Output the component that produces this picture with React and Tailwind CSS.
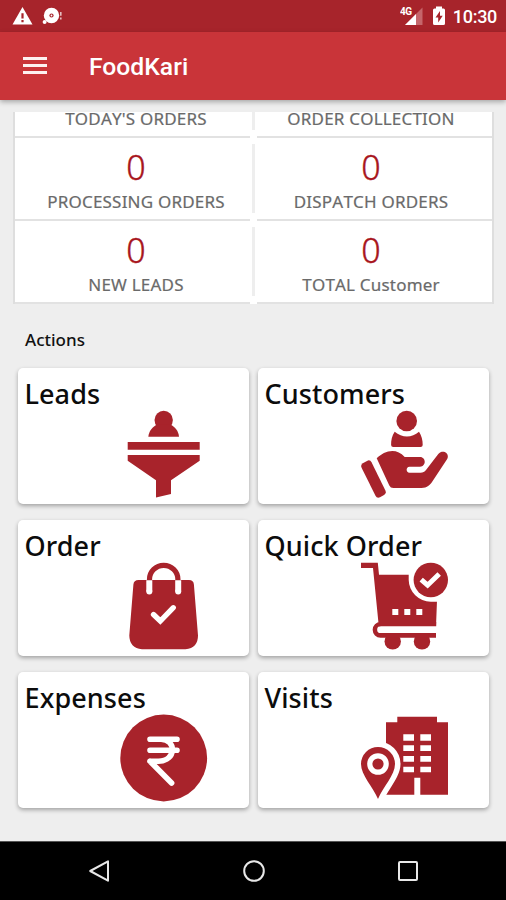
import clsx from "clsx";

const STATS = [
  { label: "TODAY'S ORDERS" },
  { label: "ORDER COLLECTION" },
  { value: "0", label: "PROCESSING ORDERS" },
  { value: "0", label: "DISPATCH ORDERS" },
  { value: "0", label: "NEW LEADS" },
  { value: "0", label: "TOTAL Customer" },
];

const ACTIONS = [
  { title: "Leads", Icon: LeadsIcon },
  { title: "Customers", Icon: CustomersIcon },
  { title: "Order", Icon: OrderIcon },
  { title: "Quick Order", Icon: QuickOrderIcon },
  { title: "Expenses", Icon: ExpensesIcon },
  { title: "Visits", Icon: VisitsIcon },
];

function LeadsIcon() {
  return (
    <>
      <circle cx="43.7" cy="10" r="9.2" />
      <path d="M28.3 26.7C29 21 32.5 16.5 37.5 14.5H50C55 16.5 58.5 21 59 26.7Z" />
      <path d="M7.7 32H79.7V39.7H7.7Z" />
      <path d="M7.7 45H79.7V50.7L51 70.3V84L36 87.5V70.3L7.7 50.7Z" />
    </>
  );
}

function CustomersIcon() {
  return (
    <>
      <circle cx="46.7" cy="11" r="10.3" />
      <path d="M34.7 21.7C32 25.5 31 30 31.1 35Q31.2 37 33.2 37H60.6Q62.6 37 62.7 35C62.8 30 61.5 25.5 59 21.7C52 28 42 28 34.7 21.7Z" />
      <path d="M2.8 53.3L7 50.9Q10 49.3 11.5 52.3L25.4 80.5Q26.6 83.4 24 84.9L20 87.2Q17 88.6 15.5 85.8L1.6 57.7Q.3 54.8 2.8 53.3Z" />
      <path d="M16.7 48.3C24 41 36 37 44.7 47H60C66.3 47 66.3 56.7 60 56.7H49.5C45.7 56.7 45.7 62.7 49.5 62.7H60.5C63 62.7 64.5 62 66 60L78.3 43.9C83 39 90 43.5 87.2 49L74 69C70.5 75 67 78 61.5 78H33.3Q30.5 78 29.3 75.5Z" />
    </>
  );
}

function OrderIcon() {
  return (
    <>
      <path d="M18.5 18H69Q73.6 18 73.9 22.5L78 73.5Q78 86 65.5 87.3H22Q9.5 86 9.3 73.5L13.4 22.5Q13.8 18 18.5 18Z" />
      <path
        d="M29.5 18V17.3A14.2 14 0 0 1 57.9 17.3V18"
        fill="none"
        stroke="#a8232b"
        strokeWidth="5.2"
      />
      <path
        d="M29.3 18.2V29.6M58.2 18.2V29.6"
        fill="none"
        stroke="#fff"
        strokeWidth="6"
      />
      <circle cx="29.3" cy="29.6" r="3" fill="#fff" />
      <circle cx="58.2" cy="29.6" r="3" fill="#fff" />
      <path
        d="M33.5 52.5L40.3 59L53.3 45.7"
        fill="none"
        stroke="#fff"
        strokeWidth="5.3"
        strokeLinecap="round"
      />
    </>
  );
}

function QuickOrderIcon() {
  return (
    <>
      <path d="M1 .7H17.8L19 12.7H78L76 64.3H18.8L13 6H1Z" />
      <path d="M82 12V39.7H70.7A22 22 0 0 1 48.7 18V12Z" fill="#fff" />
      <circle cx="32.7" cy="79.4" r="8.2" />
      <circle cx="62" cy="79.4" r="8.2" />
      <path d="M20.5 64H77V71.3H20.5Z" fill="#fff" />
      <path d="M20.5 60H76.2V64.3H20.5A3.3 3.3 0 0 0 20.5 71H76V75.7H20.5A7.8 7.8 0 0 1 20.5 60Z" />
      <circle cx="70.8" cy="18" r="17.2" />
      <path
        d="M32.3 47h6v6h-6zM44.3 47h6v6h-6zM56.3 47h6v6h-6z"
        fill="#fff"
      />
      <path
        d="M61.2 17.6L67.6 23.2L79.2 12"
        fill="none"
        stroke="#fff"
        strokeWidth="5"
      />
    </>
  );
}

function ExpensesIcon() {
  return (
    <>
      <circle cx="43.7" cy="44" r="43.4" />
      <path
        d="M30 25.3H57M30 36.3H57M30 47.2H38.5C56.5 47.2 56.5 25.3 41 25.3M30 47.2L51.6 69"
        fill="none"
        stroke="#fff"
        strokeWidth="5.6"
        strokeLinecap="round"
        strokeLinejoin="round"
      />
    </>
  );
}

function VisitsIcon() {
  return (
    <>
      <path d="M26 8.3H37.3V2.7H77V8.3H88V80.7H60.3V63.7H54.3V80.7H26Z" />
      <path
        d="M43.3 20.3H54v6.4H43.3zM60.3 20.3H71v6.4H60.3zM43.3 31.3H54V37H43.3zM60.3 31.3H71V37H60.3zM43.3 42H54v5.7H43.3zM60.3 42H71v5.7H60.3zM43.3 52.7H54v5.6H43.3zM60.3 52.7H71v5.6H60.3z"
        fill="#fff"
      />
      <path
        d="M18 85C13 73 1 61 1 50A17 17 0 0 1 35 50C35 61 23 73 18 85Z"
        stroke="#fff"
        strokeWidth="11"
        paintOrder="stroke"
      />
      <circle cx="18" cy="50" r="8.2" stroke="#fff" strokeWidth="5.2" />
    </>
  );
}

function StatusBar() {
  return (
    <div className="flex h-8 shrink-0 items-center bg-[#a7242b] pr-[9px] pl-3 text-white">
      <svg width="52" height="20" viewBox="0 0 52 20" fill="#fff">
        <path d="M10.5 1L20.5 18.5H.5Z" />
        <path d="M9.4 7.3h2.2v5.2H9.4zM9.4 14h2.2v2.2H9.4z" fill="#a7242b" />
        <circle cx="39.5" cy="9.5" r="7.7" />
        <circle cx="32.6" cy="16" r="2" />
        <circle cx="39.5" cy="9.5" r="2.1" fill="#a7242b" />
        <circle cx="39.5" cy="9.5" r=".9" />
        <path d="M48 6h1.6v3.8H48zM48 11.5h1.6v2H48z" opacity=".7" />
      </svg>
      <svg className="ml-auto" width="24" height="20" viewBox="0 0 24 20">
        <path d="M22.5 1.5V19H5Z" fill="#c5666b" />
        <path d="M16 8V19H5Z" fill="#fff" />
        <text
          x="0"
          y="9.3"
          fill="#fff"
          fontSize="10"
          fontWeight="700"
          fontFamily="Roboto, sans-serif"
          letterSpacing="-0.6"
        >
          4G
        </text>
      </svg>
      <svg className="ml-2" width="14" height="20" viewBox="0 0 14 20">
        <path
          d="M4 .5H10V2.5H11.5Q13 2.5 13 4V17.5Q13 19 11.5 19H2.5Q1 19 1 17.5V4Q1 2.5 2.5 2.5H4Z"
          fill="#fff"
        />
        <path d="M8 5L3.5 11.5H6.2V16.5L10.7 9.8H8Z" fill="#a7242b" />
      </svg>
      <span className="ml-[7px] pt-px font-[Roboto] text-[18px] leading-8 font-medium tracking-[-0.3px]">
        10:30
      </span>
    </div>
  );
}

function AppBar() {
  return (
    <header className="z-10 flex h-[68px] shrink-0 items-center bg-[#c93439] pl-[23px] text-white shadow-[0_2px_5px_rgba(0,0,0,0.3)]">
      <button type="button" aria-label="Menu" className="mb-px flex flex-col gap-1">
        <span className="h-[3px] w-[23.5px] bg-[#fdf0f0]" />
        <span className="h-[3px] w-[23.5px] bg-[#fdf0f0]" />
        <span className="h-[3px] w-[23.5px] bg-[#fdf0f0]" />
      </button>
      <h1 className="ml-[42.5px] pt-0.5 font-[Roboto] text-[24.7px] leading-none font-medium">
        FoodKari
      </h1>
    </header>
  );
}

function StatCell({ stat, right }) {
  return (
    <div
      className={clsx(
        "flex shrink-0 flex-col items-center justify-end border-b-2 border-[#e2e2e2] pb-1.5",
        stat.value ? "h-[83px]" : "h-[26px]",
        right ? "ml-0.5 pr-[7px]" : "mr-0.5 pl-[7px]"
      )}
    >
      {stat.value && (
        <span className="mb-[3px] text-[34px] leading-10 font-light text-[#a8161c] [-webkit-text-stroke:0.4px_#a8161c]">
          {stat.value}
        </span>
      )}
      <span className="text-[17px] leading-[23px] tracking-[0.2px] text-[#6a6a6a] [font-kerning:none] [-webkit-text-stroke:0.2px_#6a6a6a]">
        {stat.label}
      </span>
    </div>
  );
}

function StatPanel() {
  return (
    <section className="mt-3 mr-3 ml-[13px] border-x-2 border-[#dedede] bg-white">
      {[0, 2, 4].map((i) => (
        <div key={i} className="grid grid-cols-[1fr_3px_1fr]">
          <StatCell stat={STATS[i]} />
          <div className={clsx("mb-2 bg-[#eee]", i > 0 && "mt-1.5")} />
          <StatCell stat={STATS[i + 1]} right />
        </div>
      ))}
    </section>
  );
}

function ActionCard({ title, Icon }) {
  return (
    <button
      type="button"
      className="flex h-[136px] flex-col rounded-[5px] bg-white px-1.5 pt-[9px] text-left shadow-[0_2px_4px_rgba(0,0,0,0.32)]"
    >
      <span className="pl-[0.5px] text-[27px] leading-[33px] font-medium tracking-[0.1px] text-[#0c0c0c]">
        {title}
      </span>
      <svg
        className="ml-24 shrink-0"
        width="88"
        height="88"
        viewBox="0 0 88 88"
        fill="#a8232b"
      >
        <Icon />
      </svg>
    </button>
  );
}

function NavBar() {
  return (
    <nav className="flex h-[59px] shrink-0 items-center justify-between border-t border-[#555] bg-black pr-[86px] pl-[87px]">
      <svg width="24" height="24" viewBox="0 0 24 24" fill="none" stroke="#e8e8e8" strokeWidth="2">
        <path d="M21 2.3V21.7L3.2 12Z" strokeLinejoin="round" />
      </svg>
      <svg width="24" height="24" viewBox="0 0 24 24" fill="none" stroke="#e8e8e8" strokeWidth="2">
        <circle cx="12" cy="12" r="9.8" />
      </svg>
      <svg width="24" height="24" viewBox="0 0 24 24" fill="none" stroke="#e8e8e8" strokeWidth="2">
        <rect x="3" y="3" width="18" height="18" rx="1" />
      </svg>
    </nav>
  );
}

export default function App() {
  return (
    <div className="flex h-[900px] w-[506px] flex-col overflow-hidden bg-[#eee] font-['Noto_Sans',sans-serif]">
      <StatusBar />
      <AppBar />
      <main className="flex-1">
        <StatPanel />
        <h2 className="mt-6 ml-[25px] text-[17px] leading-[23px] font-medium text-[#111]">
          Actions
        </h2>
        <div className="mt-[17px] grid grid-cols-2 gap-x-[9px] gap-y-4 pr-[17px] pl-[18px]">
          {ACTIONS.map((action) => (
            <ActionCard key={action.title} {...action} />
          ))}
        </div>
      </main>
      <NavBar />
    </div>
  );
}
